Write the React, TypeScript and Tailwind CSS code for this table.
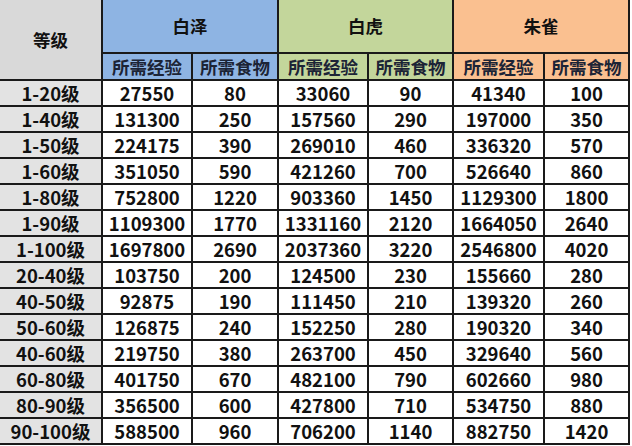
import React from "react";

const rows: [string, string, string, string, string, string, string][] = [
  ["1-20级", "27550", "80", "33060", "90", "41340", "100"],
  ["1-40级", "131300", "250", "157560", "290", "197000", "350"],
  ["1-50级", "224175", "390", "269010", "460", "336320", "570"],
  ["1-60级", "351050", "590", "421260", "700", "526640", "860"],
  ["1-80级", "752800", "1220", "903360", "1450", "1129300", "1800"],
  ["1-90级", "1109300", "1770", "1331160", "2120", "1664050", "2640"],
  ["1-100级", "1697800", "2690", "2037360", "3220", "2546800", "4020"],
  ["20-40级", "103750", "200", "124500", "230", "155660", "280"],
  ["40-50级", "92875", "190", "111450", "210", "139320", "260"],
  ["50-60级", "126875", "240", "152250", "280", "190320", "340"],
  ["40-60级", "219750", "380", "263700", "450", "329640", "560"],
  ["60-80级", "401750", "670", "482100", "790", "602660", "980"],
  ["80-90级", "356500", "600", "427800", "710", "534750", "880"],
  ["90-100级", "588500", "960", "706200", "1140", "882750", "1420"],
];

const font = {
  fontFamily: '"Noto Sans CJK SC", "Noto Sans", sans-serif',
};

export default function App() {
  return (
    <div className="w-[632px] h-[446px] bg-white overflow-hidden" style={font}>
      <div className="w-[630px] bg-[#1a1a1a] grid grid-cols-[101px_88px_84px_88px_83px_89px_83px] grid-rows-[52px_25px_repeat(14,24px)] gap-[2px] pr-[2px] pb-[2px] text-[17.5px] font-bold text-[#111] leading-none">
        <div className="row-span-2 bg-[#d9d9d9] flex items-center justify-center">等级</div>
        <div className="col-span-2 bg-[#8eb4e3] flex items-center justify-center">白泽</div>
        <div className="col-span-2 bg-[#c3d69b] flex items-center justify-center">白虎</div>
        <div className="col-span-2 bg-[#fac090] flex items-center justify-center">朱雀</div>
        <div className="bg-[#8eb4e3] flex items-center justify-center text-[#1c2436]">所需经验</div>
        <div className="bg-[#8eb4e3] flex items-center justify-center text-[#1c2436]">所需食物</div>
        <div className="bg-[#c3d69b] flex items-center justify-center text-[#1c2436]">所需经验</div>
        <div className="bg-[#c3d69b] flex items-center justify-center text-[#1c2436]">所需食物</div>
        <div className="bg-[#fac090] flex items-center justify-center text-[#1c2436]">所需经验</div>
        <div className="bg-[#fac090] flex items-center justify-center text-[#1c2436]">所需食物</div>
        {rows.map((r) => (
          <React.Fragment key={r[0]}>
            <div className="bg-[#e3e3e3] flex items-center justify-center text-[18.5px]">{r[0]}</div>
            {r.slice(1).map((v, i) => (
              <div key={i} className="bg-white flex items-center justify-center text-[18.5px]">
                {v}
              </div>
            ))}
          </React.Fragment>
        ))}
      </div>
    </div>
  );
}
